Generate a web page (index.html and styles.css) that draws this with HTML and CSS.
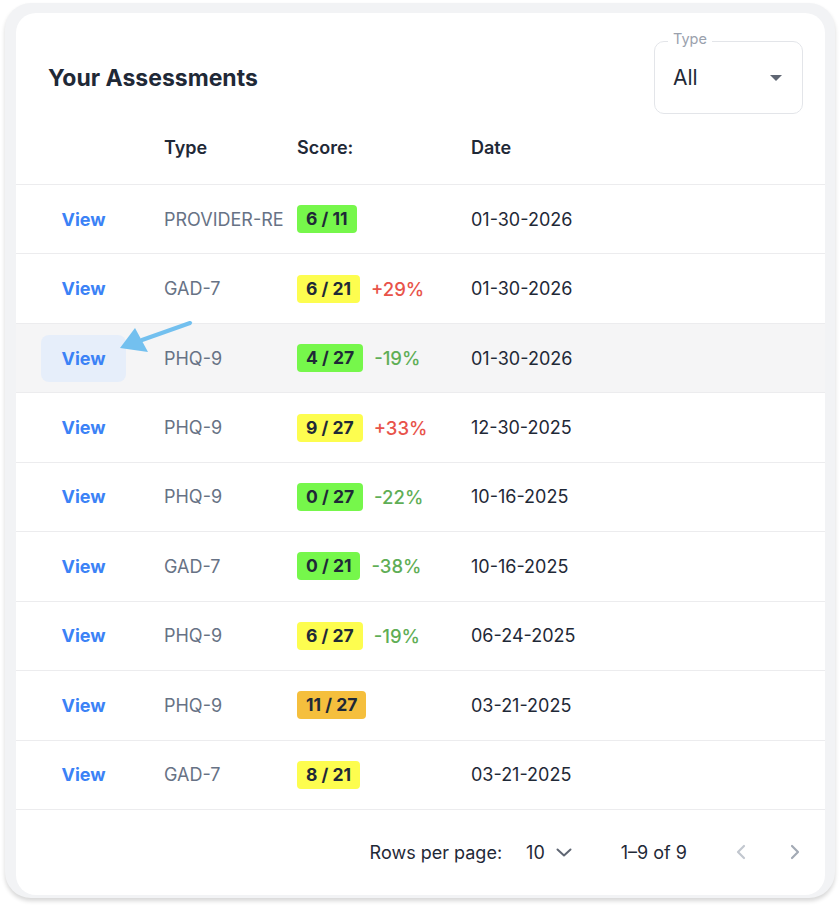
FILE: index.html
```html
<!DOCTYPE html>
<html lang="en">
<head>
<meta charset="utf-8">
<title>Your Assessments</title>
<link rel="stylesheet" href="styles.css">
</head>
<body>
<div class="frame">
  <div class="card">
    <div class="top">
      <h2 class="title">Your Assessments</h2>
      <div class="select">
        <span class="select-label">Type</span>
        <span class="select-value">All</span>
        <svg class="caret" width="12" height="6" viewBox="0 0 12 6"><path d="M0 0h12L6 6z" fill="#5f6673"/></svg>
      </div>
    </div>
    <div class="row head">
      <div class="c1"></div>
      <div class="c2">Type</div>
      <div class="c3">Score:</div>
      <div class="c4">Date</div>
    </div>
    <div class="row"><div class="c1"><span class="view">View</span></div><div class="c2 type"><span class="clip">PROVIDER-RE</span></div><div class="c3"><span class="badge green">6 / 11</span></div><div class="c4">01-30-2026</div></div>
    <div class="row"><div class="c1"><span class="view">View</span></div><div class="c2 type">GAD-7</div><div class="c3"><span class="badge yellow">6 / 21</span><span class="pct up">+29%</span></div><div class="c4">01-30-2026</div></div>
    <div class="row active"><div class="c1"><span class="view hover">View</span></div><div class="c2 type">PHQ-9</div><div class="c3"><span class="badge green">4 / 27</span><span class="pct down">-19%</span></div><div class="c4">01-30-2026</div></div>
    <div class="row"><div class="c1"><span class="view">View</span></div><div class="c2 type">PHQ-9</div><div class="c3"><span class="badge yellow">9 / 27</span><span class="pct up">+33%</span></div><div class="c4">12-30-2025</div></div>
    <div class="row"><div class="c1"><span class="view">View</span></div><div class="c2 type">PHQ-9</div><div class="c3"><span class="badge green">0 / 27</span><span class="pct down">-22%</span></div><div class="c4">10-16-2025</div></div>
    <div class="row"><div class="c1"><span class="view">View</span></div><div class="c2 type">GAD-7</div><div class="c3"><span class="badge green">0 / 21</span><span class="pct down">-38%</span></div><div class="c4">10-16-2025</div></div>
    <div class="row"><div class="c1"><span class="view">View</span></div><div class="c2 type">PHQ-9</div><div class="c3"><span class="badge yellow">6 / 27</span><span class="pct down">-19%</span></div><div class="c4">06-24-2025</div></div>
    <div class="row"><div class="c1"><span class="view">View</span></div><div class="c2 type">PHQ-9</div><div class="c3"><span class="badge orange">11 / 27</span></div><div class="c4">03-21-2025</div></div>
    <div class="row"><div class="c1"><span class="view">View</span></div><div class="c2 type">GAD-7</div><div class="c3"><span class="badge yellow">8 / 21</span></div><div class="c4">03-21-2025</div></div>
    <div class="footer">
      <span class="rpp">Rows per page:</span>
      <span class="rpp-val">10</span>
      <svg class="rpp-chev" width="16" height="9" viewBox="0 0 16 9"><path d="M1.5 1.5L8 7.5l6.5-6" fill="none" stroke="#5f6673" stroke-width="2" stroke-linecap="round" stroke-linejoin="round"/></svg>
      <span class="range">1–9 of 9</span>
      <svg class="nav prev" width="10" height="16" viewBox="0 0 10 16"><path d="M8 2L2 8l6 6" fill="none" stroke="#c2c7cf" stroke-width="2.2" stroke-linecap="round" stroke-linejoin="round"/></svg>
      <svg class="nav next" width="10" height="16" viewBox="0 0 10 16"><path d="M2 2l6 6-6 6" fill="none" stroke="#a3aab5" stroke-width="2.2" stroke-linecap="round" stroke-linejoin="round"/></svg>
    </div>
    <svg class="arrow" width="80" height="40" viewBox="0 0 80 40"><path d="M75 5L27 22" stroke="#73c0ef" stroke-width="4" stroke-linecap="round"/><path d="M5 30L20 10L33 34z" fill="#73c0ef"/></svg>
  </div>
</div>
</body>
</html>
```
FILE: styles.css
```css
* { box-sizing: border-box; }
body {
  margin: 0;
  background: #ffffff;
  font-family: Inter, "Liberation Sans", sans-serif;
  color: #1f2937;
}
.frame {
  margin: 3px 5px 8px 5px;
  height: 895px;
  background: #f2f3f5;
  border-radius: 26px;
  padding: 10px 10px 3px 11px;
  box-shadow: 0 3px 4px rgba(0, 0, 0, 0.16);
}
.card {
  position: relative;
  height: 882px;
  background: #ffffff;
  border-radius: 20px;
  overflow: hidden;
}
.top {
  display: flex;
  align-items: center;
  justify-content: space-between;
  padding: 28px 22px 0 32px;
}
.title {
  margin: 0;
  font-size: 23px;
  font-weight: 700;
  color: #1f2937;
}
.select {
  position: relative;
  width: 149px;
  height: 73px;
  border: 1px solid #e3e5e9;
  border-radius: 10px;
  display: flex;
  align-items: center;
  justify-content: space-between;
  padding: 0 20px 0 18px;
}
.select-label {
  position: absolute;
  left: 13px;
  top: -13px;
  padding: 0 5px;
  background: #ffffff;
  font-size: 14.5px;
  color: #9aa1ad;
  line-height: 20px;
}
.select-value {
  font-size: 21px;
  color: #1f2937;
}
.caret { display: block; }
.row {
  display: flex;
  align-items: center;
  height: 69.44px;
  border-bottom: 1px solid #ececee;
  font-size: 18px;
}
.row.head {
  height: 71px;
  padding-bottom: 4px;
  font-weight: 600;
  color: #1f2937;
}
.row.active { background: #f5f5f6; }
.c1 { width: 148px; flex: none; padding-left: 25px; }
.c2 { width: 120px; flex: none; overflow: hidden; white-space: nowrap; margin-right: 13px; }
.clip { display: block; overflow: hidden; white-space: nowrap; }
.c3 { width: 174px; flex: none; display: flex; align-items: center; }
.c4 { flex: 1; color: #1f2937; }
.view {
  display: inline-block;
  width: 85px;
  height: 47px;
  line-height: 47px;
  text-align: center;
  border-radius: 8px;
  color: #3b82f6;
  font-weight: 700;
  font-size: 18px;
}
.view.hover { background: #e6eefa; }
.type { color: #677285; }
.badge {
  display: inline-block;
  height: 28px;
  line-height: 28px;
  padding: 0 9px;
  border-radius: 4px;
  font-weight: 700;
  font-size: 17.5px;
  color: #1f2937;
}
.green { background: #76f74b; }
.yellow { background: #fdfd4f; }
.orange { background: #f5bf3d; }
.pct { margin-left: 11px; font-weight: 500; font-size: 18.5px; }
.up { color: #e8534a; }
.down { color: #5fae56; }
.footer {
  display: flex;
  align-items: center;
  justify-content: flex-end;
  height: 85px;
  padding-right: 25px;
  font-size: 18px;
  color: #1f2937;
}
.rpp-val { margin-left: 24px; }
.rpp-chev { margin-left: 11px; display: block; }
.range { margin-left: 49px; }
.nav { display: block; }
.prev { margin-left: 49px; }
.next { margin-left: 44px; }
.arrow {
  position: absolute;
  left: 99px;
  top: 305px;
}
```
